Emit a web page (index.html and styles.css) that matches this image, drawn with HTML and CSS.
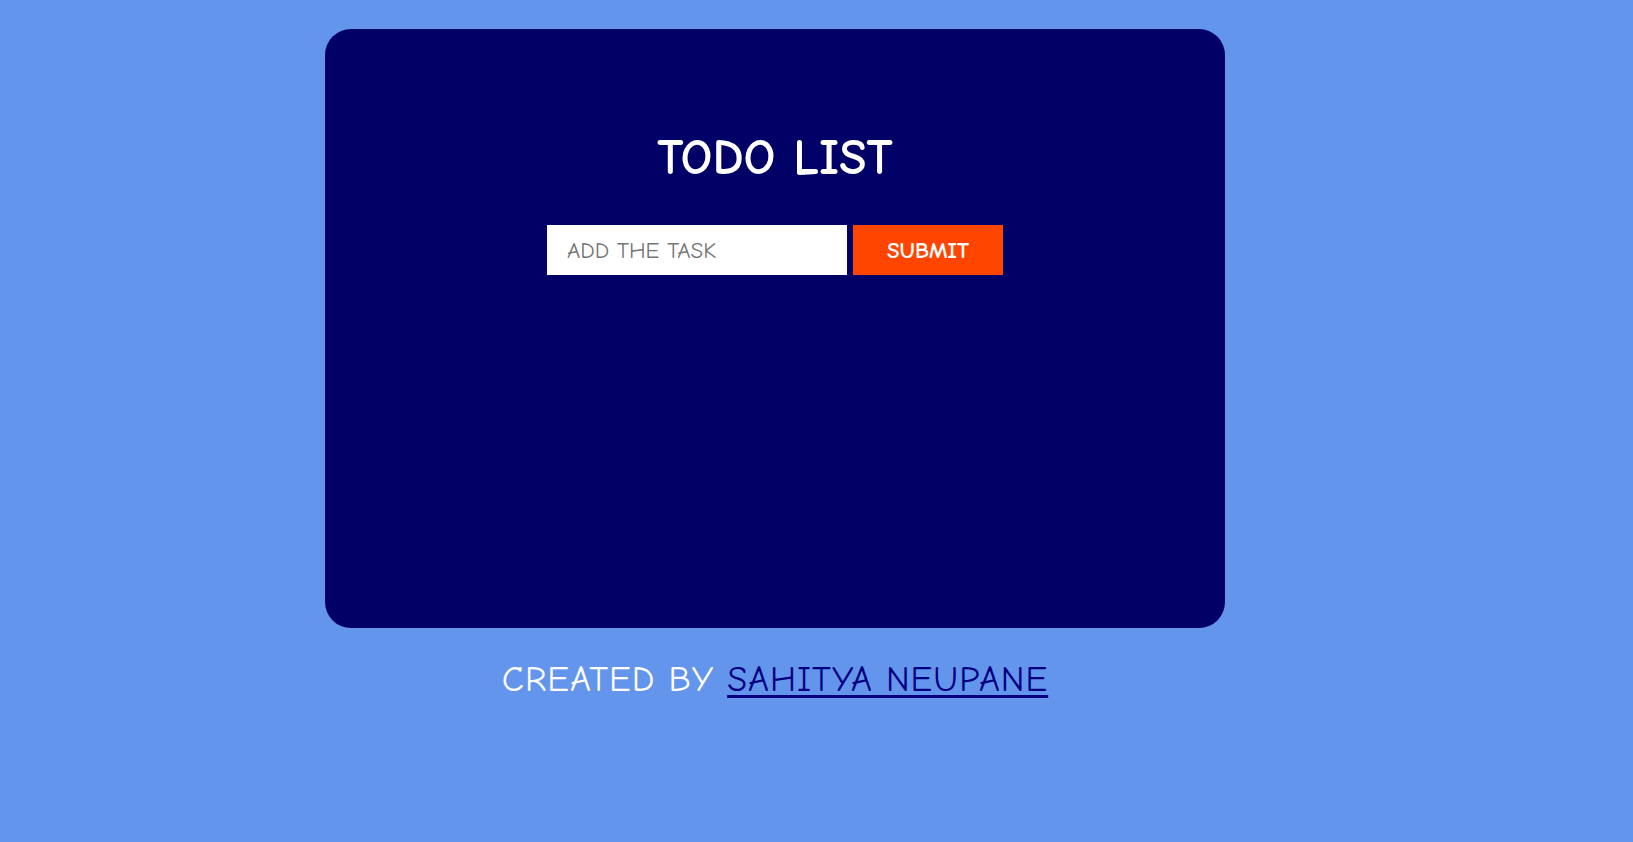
FILE: index.html
```html
<!DOCTYPE html>
<html>
<head>
<meta charset="utf-8">
<title>Todo List</title>
<link rel="stylesheet" href="styles.css">
</head>
<body>
<div class="page">
  <main class="card">
    <h1 class="title">TODO LIST</h1>
    <form class="add-form">
      <input class="task-input" type="text" placeholder="ADD THE TASK">
      <button class="submit-btn" type="button">SUBMIT</button>
    </form>
  </main>
  <footer class="footer">CREATED BY <a class="author" href="#">SAHITYA NEUPANE</a></footer>
</div>
</body>
</html>
```

FILE: styles.css
```css
html, body {
  margin: 0;
  padding: 0;
}
body {
  background: #6495ed;
  font-family: "Comic Sans MS", "Comic Neue", "DejaVu Sans", sans-serif;
  height: 842px;
  overflow: hidden;
}
.page {
  width: 900px;
  margin-left: 325px;
  padding-top: 29px;
  display: flex;
  flex-direction: column;
  align-items: center;
}
.card {
  box-sizing: border-box;
  width: 900px;
  height: 599px;
  background: #000066;
  border-radius: 26px;
  display: flex;
  flex-direction: column;
  align-items: center;
  padding-top: 103px;
}
.title {
  margin: 0;
  color: #fff;
  font-size: 50px;
  font-weight: bold;
  line-height: 52px;
}
.add-form {
  display: flex;
  gap: 6px;
  margin-top: 41px;
}
.task-input {
  box-sizing: border-box;
  width: 300px;
  height: 50px;
  border: none;
  outline: none;
  padding: 0 20px;
  font-family: inherit;
  font-size: 23px;
  background: #fff;
  color: #333;
}
.task-input::placeholder {
  color: #757575;
}
.submit-btn {
  width: 150px;
  height: 50px;
  border: none;
  background: #ff4500;
  color: #fff;
  font-family: inherit;
  font-size: 23px;
  font-weight: bold;
  padding: 0;
}
.footer {
  margin-top: 30px;
  color: #fff;
  font-size: 36px;
  line-height: 44px;
  letter-spacing: 1px;
}
.author {
  color: #000080;
  text-decoration: underline;
  text-decoration-thickness: 3px;
  text-underline-offset: 4px;
}
```
